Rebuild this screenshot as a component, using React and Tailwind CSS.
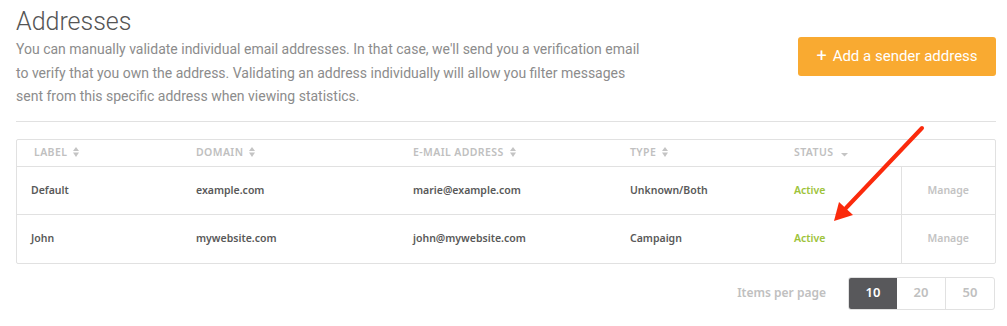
import React from 'react'

const ROWS = [
  { label: 'Default', domain: 'example.com', email: 'marie@example.com', type: 'Unknown/Both', status: 'Active' },
  { label: 'John', domain: 'mywebsite.com', email: 'john@mywebsite.com', type: 'Campaign', status: 'Active' },
]

function SortIcon() {
  return (
    <svg width="6" height="10" viewBox="0 0 6 10" className="inline-block ml-[6px] -mt-[2px]">
      <path d="M3 0 L6 4 H0 Z" fill="#c4c4c4" />
      <path d="M3 10 L6 5.5 H0 Z" fill="#c4c4c4" />
    </svg>
  )
}

function DownIcon() {
  return (
    <svg width="7" height="5" viewBox="0 0 7 5" className="inline-block ml-[8px] mt-[2px]">
      <path d="M0 1 H7 L3.5 4.5 Z" fill="#c4c4c4" />
    </svg>
  )
}

const tableFont = { fontFamily: '"Noto Sans", "DejaVu Sans", sans-serif' }

export default function App() {
  return (
    <div className="relative w-[1007px] h-[326px] bg-white pl-4 pr-[11px] overflow-hidden" style={{ fontFamily: 'Roboto, sans-serif' }}>
      <div className="flex justify-between items-start">
        <div>
          <h1 className="text-[25px] font-light text-[#555] leading-[30px] pt-[7px]">Addresses</h1>
          <p className="text-[14px] text-[#8c8c8c] leading-[23.5px] mt-[1px] w-[630px]">
            You can manually validate individual email addresses. In that case, we'll send you a verification email to verify that you own the address. Validating an address individually will allow you filter messages sent from this specific address when viewing statistics.
          </p>
        </div>
        <button className="mt-[37px] w-[198px] h-[39px] rounded-[3px] bg-[#f9aa31] text-white text-[15px] flex items-center justify-center gap-[6px]">
          <span className="text-[18px] leading-none -mt-[2px]">+</span>
          <span>Add a sender address</span>
        </button>
      </div>

      <div className="border-t border-[#e1e1e1] mt-[12px]" />

      <div className="mt-[17px] border border-[#e1e1e1] rounded-[2px]" style={tableFont}>
        <table className="w-full border-collapse table-fixed">
          <colgroup>
            <col className="w-[179px]" />
            <col className="w-[217px]" />
            <col className="w-[217px]" />
            <col className="w-[164px]" />
            <col className="w-[107px]" />
            <col />
          </colgroup>
          <thead>
            <tr className="h-[27px] text-left text-[10.5px] font-semibold uppercase text-[#c0c0c0] tracking-[0.4px]">
              <th className="pl-[17px] font-semibold">Label<SortIcon /></th>
              <th className="font-semibold">Domain<SortIcon /></th>
              <th className="font-semibold">E-mail address<SortIcon /></th>
              <th className="font-semibold">Type<SortIcon /></th>
              <th className="font-semibold">Status<DownIcon /></th>
              <th />
            </tr>
          </thead>
          <tbody>
            {ROWS.map((r, i) => (
              <tr key={i} className="h-[48px] border-t border-[#e1e1e1] text-[10.5px] font-semibold text-[#595959]">
                <td className="pl-[14px]">{r.label}</td>
                <td>{r.domain}</td>
                <td>{r.email}</td>
                <td>{r.type}</td>
                <td className="text-[#9dc33a]">{r.status}</td>
                <td className="border-l border-[#e1e1e1] text-center text-[#c3c3c3]">Manage</td>
              </tr>
            ))}
          </tbody>
        </table>
      </div>

      <div className="flex justify-end items-center mt-[13px] pr-[1px]" style={tableFont}>
        <span className="text-[12px] font-semibold text-[#c0c0c0] mr-[22px]">Items per page</span>
        <div className="flex h-[33px] border border-[#e1e1e1] rounded-[3px] overflow-hidden text-[13px] font-semibold">
          <div className="w-[48px] flex items-center justify-center bg-[#58585b] text-white">10</div>
          <div className="w-[49px] flex items-center justify-center text-[#c0c0c0] border-r border-[#e1e1e1]">20</div>
          <div className="w-[48px] flex items-center justify-center text-[#c0c0c0]">50</div>
        </div>
      </div>

      <svg className="absolute left-0 top-0 pointer-events-none" width="1007" height="326">
        <line x1="922" y1="128" x2="846" y2="208" stroke="#fb2a0c" strokeWidth="4" strokeLinecap="round" />
        <path d="M834 221 L839 202 L853 215 Z" fill="#fb2a0c" />
      </svg>
    </div>
  )
}
